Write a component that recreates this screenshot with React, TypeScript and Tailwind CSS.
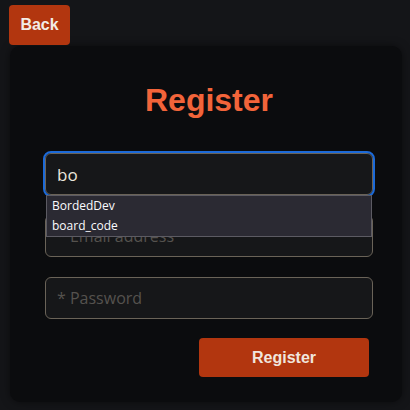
export default function App() {
  return (
    <div className="min-h-[410px] bg-[#141518] pt-[5px] pb-[8px] font-['Liberation_Sans',Arial,sans-serif]">
      <button className="ml-[9px] h-[40px] w-[61px] rounded-[4px] bg-[#b2360f] text-[16px] font-bold text-[#f3ece6]">
        Back
      </button>
      <div className="ml-[10px] mr-[8px] mt-[1px] h-[356px] rounded-[10px] bg-[#0b0c0e] pl-[35px] pr-[29px] pt-[38px] shadow-[0_0_8px_rgba(0,0,0,0.5)]">
        <h1 className="text-center text-[32px] font-bold leading-[32px] text-[#f2643a]">Register</h1>
        <div className="relative mt-[37px] flex flex-col gap-[20px] font-['Open_Sans',sans-serif]">
          <div className="relative">
            <input
              readOnly
              value="bo"
              className="h-[42px] w-full rounded-[6px] border border-[#6a6358] bg-[#161719] px-[11px] text-[17px] text-[#ece6dc] outline-2 outline-offset-0 outline-[#1c6ad8] outline-solid"
            />
            <div className="absolute left-[1px] right-[1px] top-[42px] z-10 border border-[#5c5b63] bg-[#2b2a33] text-[12px] leading-[20px] text-[#fbfbfe]">
              <div className="pl-[5px]">BordedDev</div>
              <div className="pl-[5px]">board_code</div>
            </div>
          </div>
          <input
            readOnly
            placeholder="* Email address"
            className="h-[42px] w-full rounded-[6px] border border-[#6a6358] bg-[#161719] px-[11px] text-[16px] placeholder:text-[#55524e] outline-none"
          />
          <input
            readOnly
            placeholder="* Password"
            className="h-[42px] w-full rounded-[6px] border border-[#6a6358] bg-[#161719] px-[11px] text-[16px] placeholder:text-[#55524e] outline-none"
          />
          <div className="-mt-[1px] flex justify-end pr-[4px]">
            <button className="h-[39px] w-[170px] rounded-[4px] bg-[#b2360f] font-['Liberation_Sans',Arial,sans-serif] text-[16px] font-bold text-[#f0e6de]">
              Register
            </button>
          </div>
        </div>
      </div>
    </div>
  );
}
